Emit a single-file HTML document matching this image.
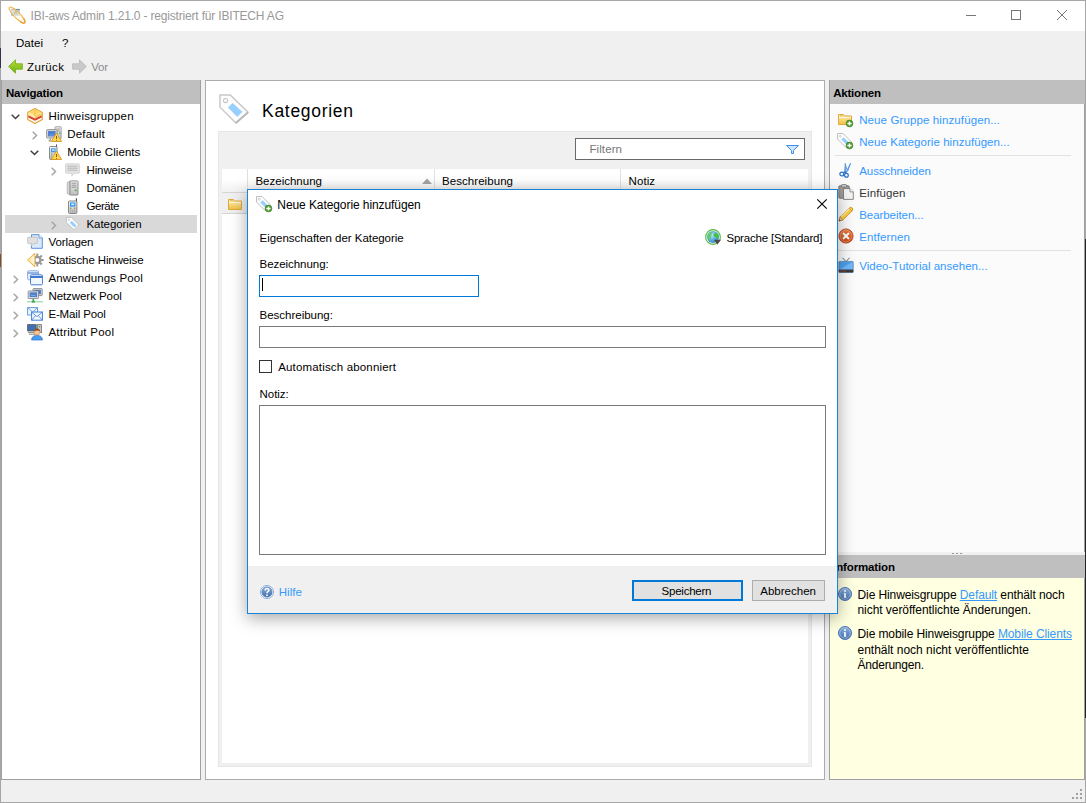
<!DOCTYPE html>
<html lang="de">
<head>
<meta charset="utf-8">
<title>IBI-aws Admin 1.21.0 - registriert für IBITECH AG</title>
<style>
*{box-sizing:border-box;margin:0;padding:0}
html,body{width:1086px;height:803px;overflow:hidden;background:#f0f0f0}
body{font-family:"Liberation Sans",sans-serif;font-size:11.5px;color:#000;position:relative}
.abs{position:absolute}
.t{position:absolute;white-space:nowrap;line-height:14px;height:14px}
.b{font-weight:bold}
.hdr{position:absolute;background:#bfbfbf}
.ico{position:absolute;width:16px;height:16px}
svg{display:block;overflow:visible;position:absolute}
.sep{position:absolute;height:1px;background:#e2e2e2;left:834px;width:237px}
.exp{position:absolute;width:9px;height:9px}
</style>
</head>
<body>
<!-- window frame -->
<div class="abs" style="left:0;top:0;width:1086px;height:803px;border:1px solid #a6a6a6;background:#f0f0f0"></div>
<div class="abs" style="left:1px;top:1px;width:1084px;height:30px;background:#fff"></div>

<!-- window controls -->
<svg style="left:960px;top:5px" width="120" height="22" viewBox="0 0 120 22">
 <path d="M6 10.5h10" stroke="#777" stroke-width="1" fill="none"/>
 <rect x="51.5" y="5.5" width="9" height="9" stroke="#777" stroke-width="1" fill="none"/>
 <path d="M97 5l10 10M107 5l-10 10" stroke="#777" stroke-width="1" fill="none"/>
</svg>


<!-- LEFT PANEL -->
<div class="abs" style="left:1px;top:80px;width:200px;height:700px;background:#fff;border-right:1px solid #a0a0a0;border-bottom:1px solid #a0a0a0;border-left:1px solid #a0a0a0"></div>
<div class="hdr" style="left:2px;top:80px;width:198px;height:24px"></div>
<div class="abs" style="left:5px;top:215px;width:192px;height:18px;background:#d9d9d9"></div>

<!-- CENTER PANEL -->
<div class="abs" style="left:205px;top:80px;width:620px;height:700px;background:#fff;border:1px solid #ababab"></div>
<div class="abs" style="left:218px;top:131px;width:594px;height:636px;background:#f0f0f0;border:1px solid #e6e6e6"></div>
<div class="abs" style="left:222px;top:169px;width:586px;height:594px;background:#fff"></div>
<!-- table header -->
<div class="abs" style="left:222px;top:169px;width:586px;height:24px;background:linear-gradient(#fff 0%,#fff 45%,#f1f1f1 100%);border-bottom:1px solid #d5d5d5"></div>
<div class="abs" style="left:247px;top:169px;width:1px;height:24px;background:#e0e0e0"></div>
<div class="abs" style="left:434px;top:169px;width:1px;height:24px;background:#e0e0e0"></div>
<div class="abs" style="left:620px;top:169px;width:1px;height:24px;background:#e0e0e0"></div>
<svg style="left:422px;top:178px" width="10" height="6" viewBox="0 0 10 6"><path d="M0 6L5 0.5L10 6z" fill="#a3a3a3"/></svg>
<!-- row 1 -->
<div class="abs" style="left:222px;top:193px;width:26px;height:21px;background:#f0f0f0;border-bottom:1px solid #d5d5d5"></div>
<!-- filter box -->
<div class="abs" style="left:575px;top:138px;width:230px;height:22px;background:#fff;border:1px solid #696969"></div>
<svg style="left:786px;top:145px" width="13" height="9" viewBox="0 0 13 9"><path d="M0.5 0.5h12l-5 5v3h-2v-3z" fill="#cfe4fb" stroke="#3d8fe8" stroke-width="1" stroke-linejoin="round"/></svg>

<!-- RIGHT PANEL -->
<div class="abs" style="left:829px;top:80px;width:256px;height:472px;background:#fbfbfb;border-left:1px solid #a0a0a0;border-right:1px solid #a0a0a0"></div>
<div class="hdr" style="left:830px;top:80px;width:255px;height:24px"></div>
<div class="sep" style="top:155px"></div>
<div class="sep" style="top:250px"></div>
<!-- splitter grip -->
<div class="abs" style="left:952px;top:553px;width:2px;height:1px;background:#999;box-shadow:4px 0 #999,8px 0 #999"></div>
<!-- info -->
<div class="abs" style="left:829px;top:555px;width:256px;height:225px;background:#ffffe1;border-left:1px solid #a0a0a0;border-right:1px solid #a0a0a0;border-bottom:1px solid #a0a0a0"></div>
<div class="hdr" style="left:830px;top:555px;width:255px;height:23px"></div>

<!-- status bar grip -->
<svg style="left:1071px;top:788px" width="12" height="12" viewBox="0 0 12 12" fill="#a0a0a0">
<rect x="9" y="1" width="2" height="2"/><rect x="5" y="5" width="2" height="2"/><rect x="9" y="5" width="2" height="2"/><rect x="1" y="9" width="2" height="2"/><rect x="5" y="9" width="2" height="2"/><rect x="9" y="9" width="2" height="2"/>
</svg>

<div class="abs" style="left:1085px;top:239px;width:1px;height:479px;background:#222"></div>
<div class="abs" style="left:0;top:48px;width:1px;height:20px;background:#33334d"></div>
<div class="abs" style="left:0;top:254px;width:1px;height:13px;background:#8a4a20"></div>
<svg width="0" height="0" style="left:0;top:0"><defs>
<linearGradient id="gY" x1="0" y1="0" x2="0" y2="1"><stop offset="0" stop-color="#fff3c0"/><stop offset="1" stop-color="#f0c040"/></linearGradient>
<linearGradient id="gG" x1="0" y1="0" x2="0" y2="1"><stop offset="0" stop-color="#b5df3a"/><stop offset="1" stop-color="#6fae12"/></linearGradient>
<linearGradient id="gB" x1="0" y1="0" x2="0" y2="1"><stop offset="0" stop-color="#8fb4e0"/><stop offset="1" stop-color="#3d6cad"/></linearGradient>
<linearGradient id="gS" x1="0" y1="0" x2="0" y2="1"><stop offset="0" stop-color="#f4f4f4"/><stop offset="1" stop-color="#bdbdbd"/></linearGradient>
<linearGradient id="gR" x1="0" y1="0" x2="0" y2="1"><stop offset="0" stop-color="#e8824a"/><stop offset="1" stop-color="#c44a1c"/></linearGradient>
<radialGradient id="gE" cx="0.4" cy="0.35" r="0.7"><stop offset="0" stop-color="#bfe6f5"/><stop offset="0.6" stop-color="#5aa7e0"/><stop offset="1" stop-color="#3b86c8"/></radialGradient>
</defs></svg>
<svg style="left:9px;top:7px" width="16" height="16" viewBox="0 0 16 16"><rect x="2" y="2" width="8.8" height="6.8" fill="#a9c6e2"/><path d="M2 2.4h8.8" stroke="#5f84a8" stroke-width="0.9"/><path d="M5.2 7.4L6.6 3.8L8 7.4M5.8 6.2h1.6" stroke="#9a7a10" stroke-width="1" fill="none"/><ellipse cx="8" cy="8" rx="10.8" ry="2.9" transform="rotate(45 8 8)" fill="#fff6e0" fill-opacity="0.55" stroke="#f2b550" stroke-width="1.1"/><path d="M11 14.6Q14.6 17.2 15.8 15.8Q16.8 14.4 14.6 11.6" fill="none" stroke="#e8a030" stroke-width="1.2"/></svg>
<svg style="left:8px;top:59px" width="15" height="15" viewBox="0 0 15 15"><path d="M0.6 7.5L7.5 0.8V4.8H14.4V10.2H7.5V14.2z" fill="url(#gG)" stroke="#7ab317" stroke-width="0.9" stroke-linejoin="round"/></svg>
<svg style="left:72px;top:59px" width="15" height="15" viewBox="0 0 15 15"><path d="M14.4 7.5L7.5 0.8V4.8H0.6V10.2H7.5V14.2z" fill="#c9c9c9" stroke="#bdbdbd" stroke-width="0.9" stroke-linejoin="round"/></svg>
<svg style="left:27px;top:108px" width="16" height="16" viewBox="0 0 16 16"><path d="M8 0.6L15.3 4.5V11.5L8 15.4L0.7 11.5V4.5z" fill="#fffdf5" stroke="#dfa030" stroke-width="1.1" stroke-linejoin="round"/><path d="M1.3 4.6L8 1.3L14.7 4.6L8 8z" fill="#ffd86a"/><path d="M1.3 4.8L8 8.2V10.2L1.3 7z" fill="#ffe9a0"/><path d="M14.7 4.8L8 8.2V10.2L14.7 7z" fill="#f7c850"/><path d="M1.3 7.2L8 10.4L14.7 7.2V9.6L8 12.8L1.3 9.6z" fill="#d9422a"/><path d="M8 1.3V8" stroke="#e8b040" stroke-width="0.6"/></svg>
<svg style="left:11px;top:114px" width="9" height="6" viewBox="0 0 9 6"><path d="M0.7 0.7L4.5 4.5L8.3 0.7" fill="none" stroke="#404040" stroke-width="1.5"/></svg>
<svg style="left:46px;top:126px" width="16" height="16" viewBox="0 0 16 16"><rect x="9" y="0.8" width="6.2" height="12" rx="0.6" fill="url(#gS)" stroke="#8e8e8e" stroke-width="0.8"/><path d="M10.5 3h3.5M10.5 5h3.5" stroke="#8a8a8a" stroke-width="0.8"/><rect x="13" y="6.5" width="1.4" height="1.4" fill="#4caf3a"/><rect x="0.6" y="3.6" width="10.4" height="8.4" rx="0.8" fill="#d8d8d8" stroke="#8e8e8e" stroke-width="0.9"/><rect x="2" y="5" width="7.6" height="5.4" fill="#4f7fd0"/><path d="M3 9h5.5" stroke="#7fa6e6" stroke-width="0.8"/><path d="M4.5 12.5v1.5h-1.5v1h6" stroke="#8e8e8e" stroke-width="0.9" fill="none"/><path d="M10.5 7L15.6 15.5H5.4z" fill="#ffd84a" stroke="#d9952a" stroke-width="0.9" stroke-linejoin="round"/><path d="M10.5 10v3M10.5 14v0.8" stroke="#8a5a10" stroke-width="1"/></svg>
<svg style="left:32px;top:131px" width="6" height="9" viewBox="0 0 6 9"><path d="M0.7 0.7L4.5 4.5L0.7 8.3" fill="none" stroke="#a6a6a6" stroke-width="1.5"/></svg>
<svg style="left:46px;top:144px" width="16" height="16" viewBox="0 0 16 16"><path d="M10.5 0.5V5" stroke="#444" stroke-width="1"/><rect x="3.5" y="2.5" width="7.5" height="13" rx="1" fill="url(#gS)" stroke="#7c7c7c" stroke-width="0.9"/><rect x="5" y="4.3" width="4.6" height="4" fill="#3d9cf0"/><rect x="6" y="5.3" width="2.6" height="1.6" fill="#bfe2ff"/><path d="M5 10h1.5" stroke="#4caf3a" stroke-width="1"/><path d="M5 12h1M5 14h1" stroke="#888" stroke-width="0.9"/><path d="M10.5 7L15.6 15.5H5.4z" fill="#ffd84a" stroke="#d9952a" stroke-width="0.9" stroke-linejoin="round"/><path d="M10.5 10v3M10.5 14v0.8" stroke="#8a5a10" stroke-width="1"/></svg>
<svg style="left:30px;top:150px" width="9" height="6" viewBox="0 0 9 6"><path d="M0.7 0.7L4.5 4.5L8.3 0.7" fill="none" stroke="#404040" stroke-width="1.5"/></svg>
<svg style="left:65px;top:162.5px" width="16" height="16" viewBox="0 0 16 16"><path d="M1.6 0.7H13.4Q14.5 0.7 14.5 1.8V9.2Q14.5 10.3 13.4 10.3H9L6.8 13.2V10.3H1.6Q0.5 10.3 0.5 9.2V1.8Q0.5 0.7 1.6 0.7z" fill="#e3e3e3" stroke="#d2d2d2" stroke-width="0.8"/><path d="M2.5 3.2h10M2.5 5.2h10M2.5 7.2h10" stroke="#b3b3b3" stroke-width="0.9"/></svg>
<svg style="left:51px;top:167px" width="6" height="9" viewBox="0 0 6 9"><path d="M0.7 0.7L4.5 4.5L0.7 8.3" fill="none" stroke="#a6a6a6" stroke-width="1.5"/></svg>
<svg style="left:65px;top:180px" width="16" height="16" viewBox="0 0 16 16"><path d="M2.2 2.6L5 1V15L2.2 13.4z" fill="#d9d9d9" stroke="#9a9a9a" stroke-width="0.6"/><rect x="5" y="0.9" width="8" height="14.2" rx="0.8" fill="url(#gS)" stroke="#858585" stroke-width="0.9"/><path d="M6.5 3.2h5M6.5 5.2h5M6.5 7.2h5" stroke="#8a8a8a" stroke-width="0.9"/><path d="M9.3 10.2l2-1.2v2.4z" fill="#3aa23a"/></svg>
<svg style="left:65px;top:198px" width="16" height="16" viewBox="0 0 16 16"><path d="M11.4 0.3V5" stroke="#444" stroke-width="1.1"/><rect x="3.5" y="3" width="8.4" height="12.5" rx="1" fill="url(#gS)" stroke="#7c7c7c" stroke-width="0.9"/><rect x="5" y="4.4" width="5.4" height="4.2" fill="#2f97f2"/><rect x="6.2" y="5.4" width="3" height="1.8" fill="#cfe9ff"/><path d="M5 10.2h1.6" stroke="#4caf3a" stroke-width="1"/><path d="M9 10.2h1.4" stroke="#e04a3a" stroke-width="1"/><path d="M5.2 12h1M7.2 12h1M9.2 12h1M5.2 13.8h1M7.2 13.8h1M9.2 13.8h1" stroke="#8a8a8a" stroke-width="0.9"/></svg>
<svg style="left:65.5px;top:217px" width="14" height="14" viewBox="0 0 16 16"><path d="M0.5 0.5H6L14.5 9L9 14.5L0.5 6z" fill="#fff" stroke="#bebebe" stroke-width="1" stroke-linejoin="round"/><circle cx="3.2" cy="3.2" r="1.1" fill="#fff" stroke="#bdbdbd" stroke-width="0.7"/><path d="M6.6 4.2L12 9.6L9.6 12L4.2 6.6z" fill="#97d0ff"/></svg>
<svg style="left:51px;top:221px" width="6" height="9" viewBox="0 0 6 9"><path d="M0.7 0.7L4.5 4.5L0.7 8.3" fill="none" stroke="#a6a6a6" stroke-width="1.5"/></svg>
<svg style="left:27px;top:234px" width="16" height="16" viewBox="0 0 16 16"><path d="M4.5 0.7H12L15.3 4V14.3H4.5z" fill="#dbeafb" stroke="#4a86d8" stroke-width="0.9" stroke-linejoin="round"/><path d="M12 0.7V4H15.3" fill="#fff" stroke="#4a86d8" stroke-width="0.8"/><path d="M1.6 3.2H9.4Q10.4 3.2 10.4 4.2V8.6Q10.4 9.6 9.4 9.6H6.5L4 12.4L4.3 9.6H1.6Q0.6 9.6 0.6 8.6V4.2Q0.6 3.2 1.6 3.2z" fill="#e0e0e0" stroke="#bdbdbd" stroke-width="0.8"/></svg>
<svg style="left:27px;top:252px" width="16" height="16" viewBox="0 0 16 16"><g fill="#9a9a9a"><circle cx="10.3" cy="8" r="4.3"/><rect x="9.3" y="1.6" width="2" height="12.8"/><rect x="3.9" y="7" width="12.8" height="2" /><rect x="9.3" y="1.6" width="2" height="12.8" transform="rotate(45 10.3 8)"/><rect x="9.3" y="1.6" width="2" height="12.8" transform="rotate(-45 10.3 8)"/></g><circle cx="10.3" cy="8" r="1.9" fill="#fff"/><path d="M0.6 8L7.8 1.2V14.8z" fill="#ffe7a8" stroke="#e8a83a" stroke-width="0.9" stroke-linejoin="round"/><path d="M3.5 8L7.3 3.4V12.6z" fill="#fff6da"/></svg>
<svg style="left:27px;top:270px" width="16" height="16" viewBox="0 0 16 16"><rect x="0.6" y="0.8" width="11" height="9" rx="1" fill="#eaf2fd" stroke="#7fa4e0" stroke-width="0.9"/><path d="M0.6 3h11" stroke="#7fa4e0" stroke-width="1.6"/><rect x="3.6" y="4.8" width="11.8" height="10" rx="1" fill="#fff" stroke="#3f78d0" stroke-width="1"/><path d="M3.6 7h11.8" stroke="#3f78d0" stroke-width="2"/><rect x="4.6" y="8.2" width="9.8" height="5.8" fill="#f3f8ff"/></svg>
<svg style="left:13px;top:275px" width="6" height="9" viewBox="0 0 6 9"><path d="M0.7 0.7L4.5 4.5L0.7 8.3" fill="none" stroke="#a6a6a6" stroke-width="1.5"/></svg>
<svg style="left:27px;top:288px" width="16" height="16" viewBox="0 0 16 16"><rect x="6" y="0.6" width="9.2" height="7" rx="0.6" fill="#d9d9d9" stroke="#7a7a7a" stroke-width="0.8"/><rect x="7.3" y="1.8" width="6.6" height="4.4" fill="#4f7fd0"/><rect x="1.2" y="3" width="10.2" height="7.6" rx="0.6" fill="#e3e3e3" stroke="#7a7a7a" stroke-width="0.8"/><rect x="2.6" y="4.3" width="7.4" height="4.8" fill="#4f7fd0"/><path d="M4 7.5h4.5" stroke="#8fb3ec" stroke-width="0.8"/><path d="M6.3 10.8v2.6" stroke="#3aa85a" stroke-width="1.4"/><path d="M0 13.8h16" stroke="#8fd0a0" stroke-width="1.1"/><rect x="4.8" y="12.6" width="3" height="2" fill="#3aa85a"/></svg>
<svg style="left:13px;top:293px" width="6" height="9" viewBox="0 0 6 9"><path d="M0.7 0.7L4.5 4.5L0.7 8.3" fill="none" stroke="#a6a6a6" stroke-width="1.5"/></svg>
<svg style="left:27px;top:306px" width="16" height="16" viewBox="0 0 16 16"><rect x="0.6" y="1.6" width="10" height="7.4" fill="#eef5fd" stroke="#5b93e0" stroke-width="0.9"/><path d="M0.8 1.8L5.6 6L10.4 1.8" fill="none" stroke="#5b93e0" stroke-width="0.8"/><rect x="4.6" y="6" width="10.8" height="8.2" fill="#f4f9ff" stroke="#3f7fd8" stroke-width="1"/><path d="M4.8 6.2L10 10.6L15.2 6.2M4.8 14L8.6 9.6M15.2 14L11.4 9.6" fill="none" stroke="#3f7fd8" stroke-width="0.8"/></svg>
<svg style="left:13px;top:311px" width="6" height="9" viewBox="0 0 6 9"><path d="M0.7 0.7L4.5 4.5L0.7 8.3" fill="none" stroke="#a6a6a6" stroke-width="1.5"/></svg>
<svg style="left:27px;top:324px" width="16" height="16" viewBox="0 0 16 16"><rect x="0.6" y="0.6" width="8.6" height="6.4" fill="#3f6fb0" stroke="#5a5a5a" stroke-width="0.8"/><rect x="10.4" y="0.6" width="4" height="8" fill="#c9c9c9" stroke="#6e6e6e" stroke-width="0.8"/><rect x="12" y="2" width="1.2" height="1.2" fill="#3aa23a"/><path d="M1 8.6h8M2 10.2h6" stroke="#8a8a8a" stroke-width="1"/><path d="M4.6 16Q4.6 11.4 10 11.4Q15.4 11.4 15.4 16z" fill="#4a9cf0" stroke="#2f74c8" stroke-width="0.7"/><circle cx="10" cy="8" r="3.1" fill="#f4c79a" stroke="#c98a50" stroke-width="0.6"/><path d="M6.9 7.4Q7.2 4.4 10 4.4Q12.8 4.4 13.1 7.4Q11 5.8 6.9 7.4z" fill="#8a4a1e"/></svg>
<svg style="left:13px;top:329px" width="6" height="9" viewBox="0 0 6 9"><path d="M0.7 0.7L4.5 4.5L0.7 8.3" fill="none" stroke="#a6a6a6" stroke-width="1.5"/></svg>
<svg style="left:219px;top:94px" width="30" height="30" viewBox="0 0 32 32"><path d="M1 1H12L31 19.5L18 31L1 14z" fill="#fdfdfd" stroke="#c6c6c6" stroke-width="1.5" stroke-linejoin="round"/><path d="M18 31L31 19.5" stroke="#b9b9b9" stroke-width="2"/><circle cx="7" cy="7" r="2.2" fill="#fff" stroke="#c4c4c4" stroke-width="1.1"/><path d="M14.5 9.5L25 19L19.5 24.5L9.5 14.5z" fill="#97d0ff"/></svg>
<svg style="left:227px;top:196px" width="16" height="16" viewBox="0 0 16 16"><path d="M1.5 3.5h5l1 1.5h7v8.5h-13z" fill="url(#gY)" stroke="#e0a83a" stroke-width="1" stroke-linejoin="round"/><path d="M2 6.5h12" stroke="#fff7d8" stroke-width="1"/><path d="M3 4.8h3" stroke="#e0a83a" stroke-width="0.8"/></svg>
<svg style="left:837px;top:111px" width="16" height="16" viewBox="0 0 16 16"><path d="M1.5 3.5h5l1 1.5h7v8.5h-13z" fill="url(#gY)" stroke="#e0a83a" stroke-width="1" stroke-linejoin="round"/><path d="M2 6.5h12" stroke="#fff7d8" stroke-width="1"/><path d="M3 4.8h3" stroke="#e0a83a" stroke-width="0.8"/><circle cx="12.5" cy="12.5" r="3.4" fill="#4f9a2e" stroke="#3c7d20" stroke-width="0.6"/><path d="M12.5 10.4v4.2M10.4 12.5h4.2" stroke="#fff" stroke-width="1.4"/></svg>
<svg style="left:837px;top:133px" width="16" height="16" viewBox="0 0 16 16"><path d="M0.5 0.5H6L14.5 9L9 14.5L0.5 6z" fill="#fff" stroke="#bebebe" stroke-width="1" stroke-linejoin="round"/><circle cx="3.2" cy="3.2" r="1.1" fill="#fff" stroke="#bdbdbd" stroke-width="0.7"/><path d="M6.6 4.2L12 9.6L9.6 12L4.2 6.6z" fill="#97d0ff"/><circle cx="12.5" cy="12.5" r="3.4" fill="#4f9a2e" stroke="#3c7d20" stroke-width="0.6"/><path d="M12.5 10.4v4.2M10.4 12.5h4.2" stroke="#fff" stroke-width="1.4"/></svg>
<svg style="left:838px;top:162px" width="16" height="16" viewBox="0 0 16 16"><path d="M6.6 10.4L7.2 1.4L8.6 6.4z" fill="#7fb4ec" stroke="#3f86d8" stroke-width="0.7" stroke-linejoin="round"/><path d="M7.6 11L12.6 1.2L10 8.6z" fill="#7fb4ec" stroke="#3f86d8" stroke-width="0.7" stroke-linejoin="round"/><circle cx="3.8" cy="12" r="1.9" fill="none" stroke="#2f74c8" stroke-width="1.3"/><circle cx="8.4" cy="13.2" r="1.9" fill="none" stroke="#2f74c8" stroke-width="1.3"/><path d="M5.2 10.8L7 9.8L8 11.4" stroke="#2f74c8" stroke-width="1.2" fill="none"/></svg>
<svg style="left:837.5px;top:184px" width="16" height="16" viewBox="0 0 16 16"><rect x="0.8" y="1.8" width="10.4" height="12.4" rx="1" fill="#9b9b9b" stroke="#6e6e6e" stroke-width="0.9"/><rect x="3.4" y="0.6" width="5.2" height="2.6" rx="0.8" fill="#c9c9c9" stroke="#6e6e6e" stroke-width="0.8"/><path d="M5.5 4.6H12L15.3 7.9V15.4H5.5z" fill="#f4f4f4" stroke="#7a7a7a" stroke-width="0.9" stroke-linejoin="round"/><path d="M12 4.6V7.9H15.3" fill="#fff" stroke="#7a7a7a" stroke-width="0.8"/></svg>
<svg style="left:838px;top:206px" width="16" height="16" viewBox="0 0 16 16"><path d="M1 15L2.2 10.8L11.6 1.6Q12.8 0.6 14.2 2Q15.4 3.4 14.4 4.4L5 13.8z" fill="#ffd24a" stroke="#c98a1e" stroke-width="0.9" stroke-linejoin="round"/><path d="M3.2 10.6L12.2 1.8" stroke="#fff0a8" stroke-width="1.2"/><path d="M1 15L2.2 10.8L5 13.8z" fill="#f2d5a8" stroke="#b87a2a" stroke-width="0.7"/><path d="M1 15l0.5-1.7 1.2 1.2z" fill="#444"/><path d="M11.2 2.2l3 3" stroke="#c98a1e" stroke-width="0.8"/></svg>
<svg style="left:837.5px;top:228px" width="16" height="16" viewBox="0 0 16 16"><circle cx="8" cy="8" r="7.1" fill="url(#gR)" stroke="#b8461c" stroke-width="0.9"/><circle cx="8" cy="8" r="5.8" fill="none" stroke="#f0a070" stroke-width="0.7" opacity="0.7"/><path d="M5.6 5.6l4.8 4.8M10.4 5.6l-4.8 4.8" stroke="#fff" stroke-width="2" stroke-linecap="round"/></svg>
<svg style="left:838px;top:257px" width="16" height="16" viewBox="0 0 16 16"><path d="M4.5 0.8L8 4.6L11.5 0.8" fill="none" stroke="#5a6a7a" stroke-width="1"/><rect x="0.8" y="4.4" width="14.4" height="11" rx="0.6" fill="#4aa0f0" stroke="#5a7a9a" stroke-width="0.7"/><path d="M1.2 12.6L14.8 4.8V12.6z" fill="#8cc8ff" opacity="0.6"/><rect x="0.8" y="12.6" width="14.4" height="2.8" fill="#3a3a3a"/><path d="M2.5 14h1M4.5 14h1M6.5 14h1" stroke="#e04a3a" stroke-width="0.9"/></svg>
<svg style="left:838px;top:587px" width="14" height="14" viewBox="0 0 14 14"><circle cx="7" cy="7" r="6.5" fill="url(#gB)" stroke="#3f6aa8" stroke-width="0.9"/><circle cx="7" cy="7" r="5.3" fill="none" stroke="#b9d0ee" stroke-width="0.7" opacity="0.8"/><path d="M7 6.2v4" stroke="#fff" stroke-width="1.7"/><circle cx="7" cy="4.1" r="1" fill="#fff"/><path d="M5.8 6.4h1.2M5.8 10.2h2.6" stroke="#fff" stroke-width="0.9"/></svg>
<svg style="left:838px;top:626px" width="14" height="14" viewBox="0 0 14 14"><circle cx="7" cy="7" r="6.5" fill="url(#gB)" stroke="#3f6aa8" stroke-width="0.9"/><circle cx="7" cy="7" r="5.3" fill="none" stroke="#b9d0ee" stroke-width="0.7" opacity="0.8"/><path d="M7 6.2v4" stroke="#fff" stroke-width="1.7"/><circle cx="7" cy="4.1" r="1" fill="#fff"/><path d="M5.8 6.4h1.2M5.8 10.2h2.6" stroke="#fff" stroke-width="0.9"/></svg>
<div class="t" id="t0" style="left:30.5px;top:9px;font-size:12px;line-height:14px;height:14px;letter-spacing:-0.179px;color:#999999;">IBI-aws Admin 1.21.0 - registriert für IBITECH AG</div>
<div class="t" id="t1" style="left:16px;top:36px;letter-spacing:0.035px;">Datei</div>
<div class="t" id="t2" style="left:62px;top:36px;">?</div>
<div class="t" id="t3" style="left:27px;top:60px;letter-spacing:0.369px;">Zurück</div>
<div class="t" id="t4" style="left:91.3px;top:60px;letter-spacing:-0.283px;color:#8c8c8c;">Vor</div>
<div class="t b" id="t5" style="left:6px;top:86px;letter-spacing:-0.200px;">Navigation</div>
<div class="t b" id="t6" style="left:833.2px;top:86px;letter-spacing:-0.200px;">Aktionen</div>
<div class="t b" id="t7" style="left:833.2px;top:560px;letter-spacing:-0.145px;">Information</div>
<div class="t" id="t8" style="left:48.4px;top:109px;letter-spacing:0.210px;">Hinweisgruppen</div>
<div class="t" id="t9" style="left:67.2px;top:127px;letter-spacing:0.194px;">Default</div>
<div class="t" id="t10" style="left:67.2px;top:145px;letter-spacing:0.074px;">Mobile Clients</div>
<div class="t" id="t11" style="left:86.5px;top:163px;letter-spacing:-0.125px;">Hinweise</div>
<div class="t" id="t12" style="left:86.5px;top:181px;letter-spacing:-0.179px;">Domänen</div>
<div class="t" id="t13" style="left:86.5px;top:199px;letter-spacing:-0.434px;">Geräte</div>
<div class="t" id="t14" style="left:86.5px;top:217px;letter-spacing:-0.058px;">Kategorien</div>
<div class="t" id="t15" style="left:48.4px;top:235px;letter-spacing:-0.044px;">Vorlagen</div>
<div class="t" id="t16" style="left:48.4px;top:253px;letter-spacing:-0.115px;">Statische Hinweise</div>
<div class="t" id="t17" style="left:48.4px;top:271px;letter-spacing:0.127px;">Anwendungs Pool</div>
<div class="t" id="t18" style="left:48.4px;top:289px;letter-spacing:-0.062px;">Netzwerk Pool</div>
<div class="t" id="t19" style="left:48.4px;top:307px;letter-spacing:-0.141px;">E-Mail Pool</div>
<div class="t" id="t20" style="left:48.4px;top:325px;letter-spacing:0.245px;">Attribut Pool</div>
<div class="t" id="t21" style="left:262px;top:100px;font-size:17.5px;line-height:22px;height:22px;letter-spacing:0.705px;">Kategorien</div>
<div class="t" id="t22" style="left:589.4px;top:142px;letter-spacing:0.108px;color:#767676;">Filtern</div>
<div class="t" id="t23" style="left:255.4px;top:174px;letter-spacing:0.010px;">Bezeichnung</div>
<div class="t" id="t24" style="left:442px;top:174px;letter-spacing:0.061px;">Beschreibung</div>
<div class="t" id="t25" style="left:628.6px;top:174px;letter-spacing:0.049px;">Notiz</div>
<div class="t" id="t26" style="left:859.2px;top:113px;letter-spacing:0.112px;color:#3399ff;">Neue Gruppe hinzufügen...</div>
<div class="t" id="t27" style="left:859.2px;top:135px;letter-spacing:0.057px;color:#3399ff;">Neue Kategorie hinzufügen...</div>
<div class="t" id="t28" style="left:859.2px;top:164px;letter-spacing:-0.050px;color:#3399ff;">Ausschneiden</div>
<div class="t" id="t29" style="left:859.2px;top:186px;letter-spacing:0.128px;color:#333;">Einfügen</div>
<div class="t" id="t30" style="left:859.2px;top:208px;letter-spacing:-0.060px;color:#3399ff;">Bearbeiten...</div>
<div class="t" id="t31" style="left:859.2px;top:230px;letter-spacing:0.116px;color:#3399ff;">Entfernen</div>
<div class="t" id="t32" style="left:859.2px;top:259px;letter-spacing:0.023px;color:#3399ff;">Video-Tutorial ansehen...</div>
<div class="t" id="t33" style="left:857.5px;top:588px;font-size:12px;line-height:14px;height:14px;letter-spacing:-0.100px;">Die Hinweisgruppe <span style="color:#3399ff;text-decoration:underline">Default</span> enthält noch</div>
<div class="t" id="t34" style="left:857.5px;top:603px;font-size:12px;line-height:14px;height:14px;letter-spacing:-0.054px;">nicht veröffentlichte Änderungen.</div>
<div class="t" id="t35" style="left:857.5px;top:627px;font-size:12px;line-height:14px;height:14px;letter-spacing:-0.095px;">Die mobile Hinweisgruppe <span style="color:#3399ff;text-decoration:underline">Mobile Clients</span></div>
<div class="t" id="t36" style="left:857.5px;top:643px;font-size:12px;line-height:14px;height:14px;letter-spacing:-0.012px;">enthält noch nicht veröffentlichte</div>
<div class="t" id="t37" style="left:857.5px;top:658px;font-size:12px;line-height:14px;height:14px;letter-spacing:-0.223px;">Änderungen.</div>

<!-- DIALOG -->
<div class="abs" style="left:247px;top:189px;width:591px;height:425px;background:#fff;border:1px solid #1883d7;box-shadow:0 4px 16px rgba(0,0,0,0.35)"></div>
<div class="abs" style="left:248px;top:566px;width:589px;height:47px;background:#f0f0f0"></div>
<svg style="left:817px;top:199px" width="10" height="10" viewBox="0 0 10 10"><path d="M0.3 0.3l9.4 9.4M9.7 0.3l-9.4 9.4" stroke="#000" stroke-width="1.1" fill="none"/></svg>
<!-- inputs -->
<div class="abs" style="left:259px;top:275px;width:220px;height:22px;background:#fff;border:1px solid #0078d7"></div>
<div class="abs" style="left:262px;top:278px;width:1px;height:13px;background:#000"></div>
<div class="abs" style="left:259px;top:326px;width:567px;height:22px;background:#fff;border:1px solid #7a7a7a"></div>
<div class="abs" style="left:259px;top:360px;width:13px;height:13px;background:#fff;border:1px solid #333"></div>
<div class="abs" style="left:259px;top:405px;width:567px;height:150px;background:#fff;border:1px solid #7a7a7a"></div>
<!-- buttons -->
<div class="abs" style="left:632px;top:580px;width:111px;height:21px;background:#e1e1e1;border:2px solid #0078d7"></div>
<div class="abs" style="left:752px;top:580px;width:73px;height:21px;background:#e1e1e1;border:1px solid #adadad"></div>

<svg style="left:256px;top:196px" width="16" height="16" viewBox="0 0 16 16"><path d="M0.5 0.5H6L14.5 9L9 14.5L0.5 6z" fill="#fff" stroke="#bebebe" stroke-width="1" stroke-linejoin="round"/><circle cx="3.2" cy="3.2" r="1.1" fill="#fff" stroke="#bdbdbd" stroke-width="0.7"/><path d="M6.6 4.2L12 9.6L9.6 12L4.2 6.6z" fill="#97d0ff"/><circle cx="12.5" cy="12.5" r="3.4" fill="#4f9a2e" stroke="#3c7d20" stroke-width="0.6"/><path d="M12.5 10.4v4.2M10.4 12.5h4.2" stroke="#fff" stroke-width="1.4"/></svg>
<svg style="left:705px;top:229px" width="16" height="16" viewBox="0 0 16 16"><circle cx="8" cy="8" r="7.4" fill="#e8f7e0" stroke="#55b848" stroke-width="1.1"/><circle cx="8" cy="8" r="6" fill="url(#gE)"/><path d="M3 5Q5 2.4 8 2.6Q6 5 6.4 7.2Q5 8.6 5.2 11.4Q3 10.6 2.4 8Q2.2 6.4 3 5z" fill="#5cc96a" opacity="0.9"/><path d="M8.6 5.4Q11 3.4 13.2 5.2Q14 7 13.6 9Q11.4 9.4 10 8Q8 7 8.6 5.4z" fill="#3fc24a"/><path d="M8.8 10.8h7.2l-3.6 4.8z" fill="#4a4a4a"/></svg>
<svg style="left:260px;top:585px" width="14" height="14" viewBox="0 0 14 14"><circle cx="7" cy="7" r="6.6" fill="#eaf1fb" stroke="#7fa4d8" stroke-width="0.8"/><circle cx="7" cy="7" r="5.1" fill="url(#gB)" stroke="#3f6aa8" stroke-width="0.6"/><path d="M5.2 5.4Q5.2 3.6 7 3.6Q8.8 3.6 8.8 5.2Q8.8 6.2 7.6 6.8Q7 7.2 7 8.2" fill="none" stroke="#fff" stroke-width="1.5"/><circle cx="7" cy="10.2" r="0.9" fill="#fff"/></svg>
<div class="t" id="t38" style="left:277.3px;top:198px;font-size:12px;line-height:14px;height:14px;letter-spacing:-0.081px;">Neue Kategorie hinzufügen</div>
<div class="t" id="t39" style="left:259.6px;top:231px;letter-spacing:-0.040px;">Eigenschaften der Kategorie</div>
<div class="t" id="t40" style="left:726.4px;top:231px;letter-spacing:-0.176px;">Sprache [Standard]</div>
<div class="t" id="t41" style="left:259.6px;top:257px;letter-spacing:-0.055px;">Bezeichnung:</div>
<div class="t" id="t42" style="left:259.6px;top:308px;letter-spacing:-0.019px;">Beschreibung:</div>
<div class="t" id="t43" style="left:278.2px;top:360px;letter-spacing:0.168px;">Automatisch abonniert</div>
<div class="t" id="t44" style="left:259.6px;top:387px;letter-spacing:-0.061px;">Notiz:</div>
<div class="t" id="t45" style="left:278.8px;top:585px;letter-spacing:-0.004px;color:#3399ff;">Hilfe</div>
<div class="t" id="t46" style="left:661.6px;top:584px;letter-spacing:-0.237px;">Speichern</div>
<div class="t" id="t47" style="left:760.2px;top:584px;letter-spacing:0.022px;">Abbrechen</div>
</body>
</html>
